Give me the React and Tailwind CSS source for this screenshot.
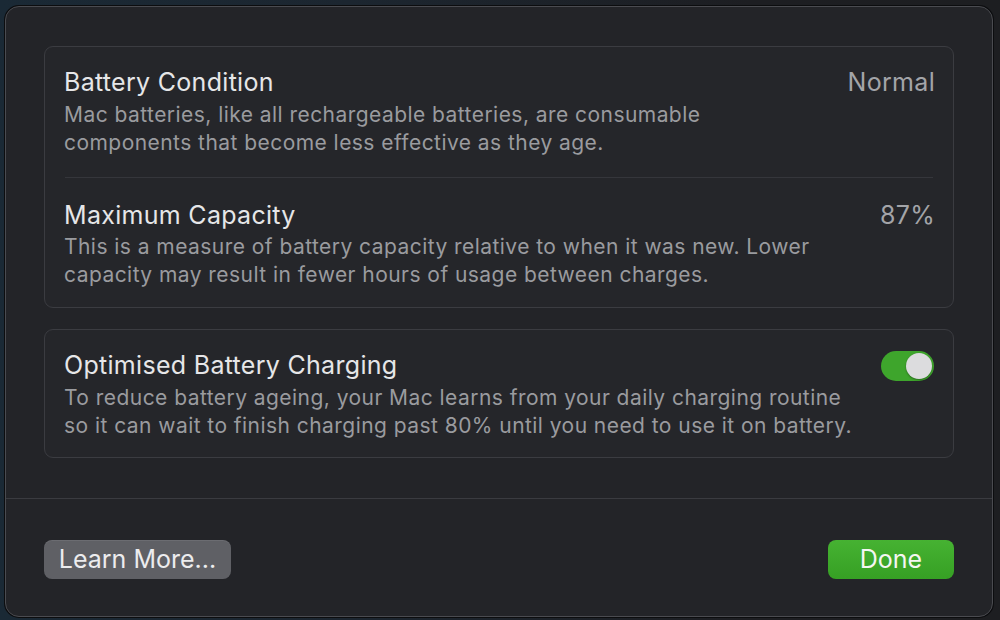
const font = { fontFamily: "Inter, 'Noto Sans', sans-serif" };

function Row({ title, value, children, className = "" }) {
  return (
    <div className={`pl-[19px] pr-[19px] ${className}`}>
      <div className="flex items-start justify-between">
        <div className="text-[25px] leading-[32px] text-[#e6e6e8] tracking-[0.3px]">{title}</div>
        {value}
      </div>
      {children}
    </div>
  );
}

function Body({ children, className = "" }) {
  return (
    <p className={`text-[21px] leading-[28px] text-[#9a9b9f] tracking-[0.45px] whitespace-nowrap ${className}`}>
      {children}
    </p>
  );
}

export default function App() {
  return (
    <div
      className="w-[1000px] h-[620px] overflow-hidden bg-[linear-gradient(90deg,#1a2935_0%,#1c2630_35%,#1d1e22_75%,#1d1e21_100%)]"
      style={font}
    >
      <div className="ml-[5px] pt-[6px]">
        <div className="w-[988px] h-[611px] flex flex-col rounded-[14px] border border-[#4a4b50] bg-[#232428] shadow-[0_0_0_1px_#0c0d0f]">
          <div className="px-[38px] pt-[39px] pb-[40px]">
            <div className="rounded-[9px] border border-[#3b3c41] bg-[#25262a]">
              <Row
                className="pt-[19px] pb-[20px]"
                title="Battery Condition"
                value={<span className="mr-[-1px] text-[25px] leading-[32px] text-[#a3a4a8] tracking-[0.3px]">Normal</span>}
              >
                <Body className="mt-[3px]">
                  Mac batteries, like all rechargeable batteries, are consumable
                  <br />
                  components that become less effective as they age.
                </Body>
              </Row>
              <div className="mx-[20px] h-px bg-[#35363b]" />
              <Row
                className="pt-[21px] pb-[18px]"
                title="Maximum Capacity"
                value={<span className="mr-[-1px] text-[25px] leading-[32px] text-[#a3a4a8] tracking-[0.3px]">87%</span>}
              >
                <Body className="mt-[2px]">
                  This is a measure of battery capacity relative to when it was new. Lower
                  <br />
                  capacity may result in fewer hours of usage between charges.
                </Body>
              </Row>
            </div>

            <div className="mt-[21px] rounded-[9px] border border-[#3b3c41] bg-[#25262a]">
              <Row
                className="pt-[19px] pb-[17px]"
                title="Optimised Battery Charging"
                value={
                  <div className="mt-[2px] w-[53px] h-[30px] rounded-full bg-[#3ea52c] flex items-center justify-end pr-[2px]">
                    <div className="w-[26px] h-[26px] rounded-full bg-[#dcdcde] shadow-[0_1px_2px_rgba(0,0,0,0.35)]" />
                  </div>
                }
              >
                <Body className="mt-[3px]">
                  To reduce battery ageing, your Mac learns from your daily charging routine
                  <br />
                  so it can wait to finish charging past 80% until you need to use it on battery.
                </Body>
              </Row>
            </div>
          </div>

          <div className="border-t border-[#3a3b40] px-[38px] pt-[41px] flex justify-between">
            <button className="w-[187px] h-[39px] rounded-[8px] bg-[#5f6065] text-[25px] leading-none text-[#ececee] shadow-[inset_0_1px_0_rgba(255,255,255,0.08)]">
              Learn More...
            </button>
            <button className="w-[126px] h-[39px] rounded-[8px] bg-[linear-gradient(180deg,#46b232_0%,#36a024_100%)] text-[25px] leading-none text-[#f4f6f2]">
              Done
            </button>
          </div>
        </div>
      </div>
    </div>
  );
}
